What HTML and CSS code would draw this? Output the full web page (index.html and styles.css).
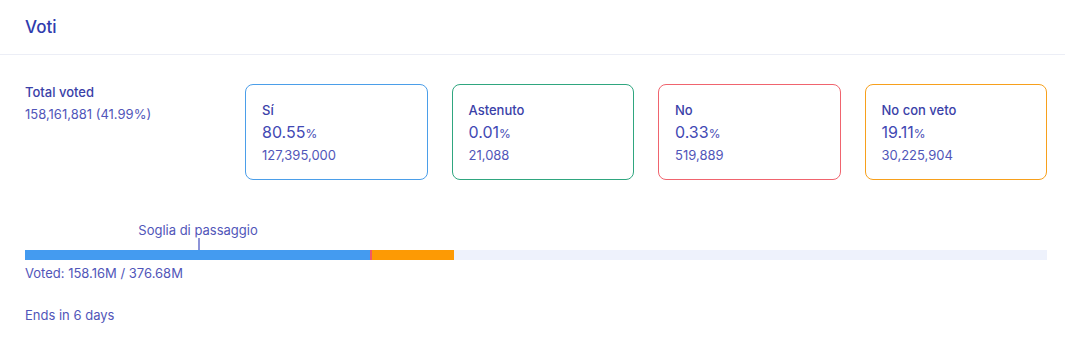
FILE: index.html
```html
<!DOCTYPE html>
<html lang="it">
  <head>
    <meta charset="UTF-8" />
    <title>Voti</title>
    <link rel="stylesheet" href="styles.css">
  </head>
  <body>
    <div class="header">
      <h2>Voti</h2>
    </div>

    <div class="content">
      <div class="riga">
        <div class="totale">
          <div class="etichetta">Total voted</div>
          <div class="valore">158,161,881 (41.99%)</div>
        </div>

        <div class="cards">
          <div class="card si">
            <div class="titolo">Sí</div>
            <div class="perc">80.55<span>%</span></div>
            <div class="num">127,395,000</div>
          </div>
          <div class="card astenuto">
            <div class="titolo">Astenuto</div>
            <div class="perc">0.01<span>%</span></div>
            <div class="num">21,088</div>
          </div>
          <div class="card no">
            <div class="titolo">No</div>
            <div class="perc">0.33<span>%</span></div>
            <div class="num">519,889</div>
          </div>
          <div class="card veto">
            <div class="titolo">No con veto</div>
            <div class="perc">19.11<span>%</span></div>
            <div class="num">30,225,904</div>
          </div>
        </div>
      </div>

      <div class="barra-box">
        <div class="soglia" style="left: 16.93%">
          <span>Soglia di passaggio</span>
        </div>
        <div class="barra">
          <div class="seg blu" style="width: 33.75%"></div>
          <div class="seg rosso" style="width: 0.2%"></div>
          <div class="seg arancio" style="width: 8.02%"></div>
        </div>
        <div class="voted">Voted: 158.16M / 376.68M</div>
      </div>

      <div class="fine">Ends in 6 days</div>
    </div>
  </body>
</html>
```

FILE: styles.css
```css
body {
  font-family: Inter, "Open Sans", sans-serif;
  background-color: #ffffff;
  color: #5156b9;
  margin: 0;
  font-size: 13px;
  line-height: 16px;
}

.header {
  height: 54px;
  border-bottom: 1px solid #eceef6;
  padding: 0 25px;
  display: flex;
  align-items: center;
}

.header h2 {
  margin: 0;
  font-size: 17px;
  font-weight: 500;
  color: #2f3cae;
}

.content {
  padding: 29px 18px 0 25px;
}

.riga {
  display: flex;
}

.totale {
  width: 220px;
}

.etichetta {
  font-weight: 500;
  color: #3a41a8;
  margin-bottom: 6px;
}

.cards {
  flex: 1;
  display: flex;
  gap: 24px;
}

.card {
  flex: 1;
  border: 1px solid;
  border-radius: 8px;
  padding: 17px 16px 0 16px;
  box-sizing: border-box;
  height: 96px;
}

.card.si { border-color: #4b9ee9; }
.card.astenuto { border-color: #2fa67f; }
.card.no { border-color: #f0646e; }
.card.veto { border-color: #f7a01c; }

.titolo {
  font-weight: 500;
  color: #3a41a8;
  line-height: 17px;
}

.perc {
  font-size: 16px;
  line-height: 26px;
  color: #4249b4;
}

.perc span {
  font-size: 12px;
}

.num {
  line-height: 17px;
}

.barra-box {
  position: relative;
  margin-top: 41px;
  padding-top: 29px;
}

.soglia {
  position: absolute;
  top: 0;
  width: 2px;
  height: 29px;
}

.soglia::after {
  content: "";
  position: absolute;
  left: 0;
  bottom: 0;
  width: 2px;
  height: 12px;
  background-color: #8d94d8;
}

.soglia span {
  position: absolute;
  top: 2px;
  left: 0;
  transform: translateX(-50%);
  white-space: nowrap;
  line-height: 14px;
}

.barra {
  height: 10px;
  display: flex;
  background-color: #eef2fc;
}

.seg.blu { background-color: #449bf0; }
.seg.rosso { background-color: #ef5a66; }
.seg.arancio { background-color: #fd9a04; }

.voted {
  margin-top: 5px;
}

.fine {
  margin-top: 26px;
}
```
